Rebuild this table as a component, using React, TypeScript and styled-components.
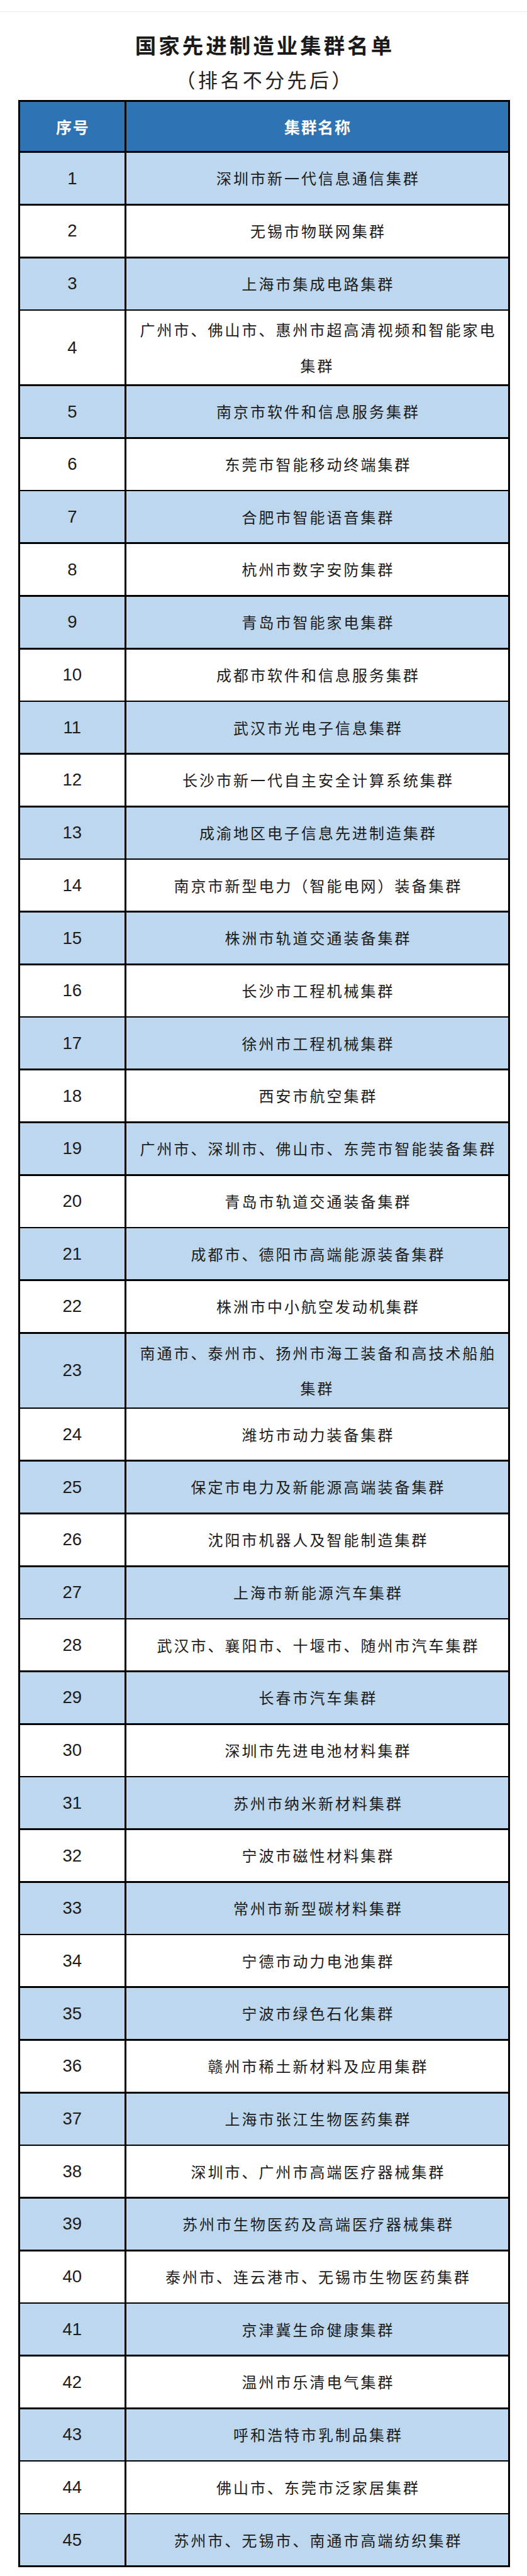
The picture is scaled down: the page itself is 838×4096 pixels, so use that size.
import React from "react";
import styled, { createGlobalStyle } from "styled-components";

const GlobalStyle = createGlobalStyle`
  html, body {
    margin: 0;
    padding: 0;
    background: #ffffff;
  }
  body {
    font-family: "Liberation Sans", "Noto Sans CJK SC", sans-serif;
    color: #1c1c1c;
  }
`;

const BORDER = 2.7;
const ROW_PITCH = 83.72;
const HEAD_PITCH = 81.3;

const Page = styled.main`
  width: 838px;
  min-height: 4096px;
  box-sizing: border-box;
  padding: 18px 0 0;
  background: #ffffff;
  display: flex;
  flex-direction: column;
`;

const TopRule = styled.div`
  height: 1px;
  width: 100%;
  background: #ececec;
`;

const Title = styled.h1`
  margin: 29.5px 0 0;
  font-family: "Noto Sans CJK SC", sans-serif;
  font-weight: 700;
  font-size: 33.5px;
  line-height: 44px;
  letter-spacing: 4px;
  text-indent: 4px;
  text-align: center;
  color: #1a1a1a;
`;

const Subtitle = styled.p`
  margin: 11.5px 0 0;
  font-family: "Noto Sans CJK SC", sans-serif;
  font-weight: 400;
  font-size: 31px;
  line-height: 44px;
  letter-spacing: 4.4px;
  text-indent: 4.4px;
  text-align: center;
  color: #222222;
`;

const Table = styled.section`
  margin: 11.2px 0 0 29px;
  width: 782px;
  box-sizing: border-box;
  padding: ${BORDER}px;
  background: #000000;
  display: grid;
  row-gap: ${BORDER}px;
`;

const Row = styled.div`
  display: grid;
  grid-template-columns: ${169 - BORDER}px 1fr;
  column-gap: ${BORDER}px;
`;

type Tone = "head" | "blue" | "white";

const toneBg: Record<Tone, string> = {
  head: "#2e74b5",
  blue: "#bdd7ee",
  white: "#ffffff",
};

const Cell = styled.div<{ $tone: Tone }>`
  background: ${(p) => toneBg[p.$tone]};
  display: flex;
  align-items: center;
  justify-content: center;
  text-align: center;
  box-sizing: border-box;
`;

const HeadCell = styled(Cell)`
  height: ${HEAD_PITCH - BORDER}px;
  color: #ffffff;
  font-family: "Noto Sans CJK SC", sans-serif;
  font-weight: 700;
  font-size: 25px;
  letter-spacing: 1.6px;
  text-indent: 1.6px;
`;

const NumCell = styled(Cell)`
  min-height: ${ROW_PITCH - BORDER}px;
  font-family: "Liberation Sans", sans-serif;
  font-size: 27.5px;
  color: #1c1c1c;
`;

const NameCell = styled(Cell)`
  min-height: ${ROW_PITCH - BORDER}px;
  padding: 2.2px 12px;
  font-family: "Noto Sans CJK SC", sans-serif;
  font-weight: 400;
  font-size: 24px;
  line-height: 56.35px;
  letter-spacing: 3px;
  text-indent: 3px;
  color: #1c1c1c;
`;

const clusters: string[] = [
  "深圳市新一代信息通信集群",
  "无锡市物联网集群",
  "上海市集成电路集群",
  "广州市、佛山市、惠州市超高清视频和智能家电集群",
  "南京市软件和信息服务集群",
  "东莞市智能移动终端集群",
  "合肥市智能语音集群",
  "杭州市数字安防集群",
  "青岛市智能家电集群",
  "成都市软件和信息服务集群",
  "武汉市光电子信息集群",
  "长沙市新一代自主安全计算系统集群",
  "成渝地区电子信息先进制造集群",
  "南京市新型电力（智能电网）装备集群",
  "株洲市轨道交通装备集群",
  "长沙市工程机械集群",
  "徐州市工程机械集群",
  "西安市航空集群",
  "广州市、深圳市、佛山市、东莞市智能装备集群",
  "青岛市轨道交通装备集群",
  "成都市、德阳市高端能源装备集群",
  "株洲市中小航空发动机集群",
  "南通市、泰州市、扬州市海工装备和高技术船舶集群",
  "潍坊市动力装备集群",
  "保定市电力及新能源高端装备集群",
  "沈阳市机器人及智能制造集群",
  "上海市新能源汽车集群",
  "武汉市、襄阳市、十堰市、随州市汽车集群",
  "长春市汽车集群",
  "深圳市先进电池材料集群",
  "苏州市纳米新材料集群",
  "宁波市磁性材料集群",
  "常州市新型碳材料集群",
  "宁德市动力电池集群",
  "宁波市绿色石化集群",
  "赣州市稀土新材料及应用集群",
  "上海市张江生物医药集群",
  "深圳市、广州市高端医疗器械集群",
  "苏州市生物医药及高端医疗器械集群",
  "泰州市、连云港市、无锡市生物医药集群",
  "京津冀生命健康集群",
  "温州市乐清电气集群",
  "呼和浩特市乳制品集群",
  "佛山市、东莞市泛家居集群",
  "苏州市、无锡市、南通市高端纺织集群",
];

export default function App() {
  return (
    <>
      <GlobalStyle />
      <Page>
        <TopRule />
        <Title>国家先进制造业集群名单</Title>
        <Subtitle>（排名不分先后）</Subtitle>
        <Table>
          <Row>
            <HeadCell $tone="head">序号</HeadCell>
            <HeadCell $tone="head">集群名称</HeadCell>
          </Row>
          {clusters.map((name, i) => {
            const tone: Tone = i % 2 === 0 ? "blue" : "white";
            return (
              <Row key={i}>
                <NumCell $tone={tone}>{i + 1}</NumCell>
                <NameCell $tone={tone}>{name}</NameCell>
              </Row>
            );
          })}
        </Table>
      </Page>
    </>
  );
}
